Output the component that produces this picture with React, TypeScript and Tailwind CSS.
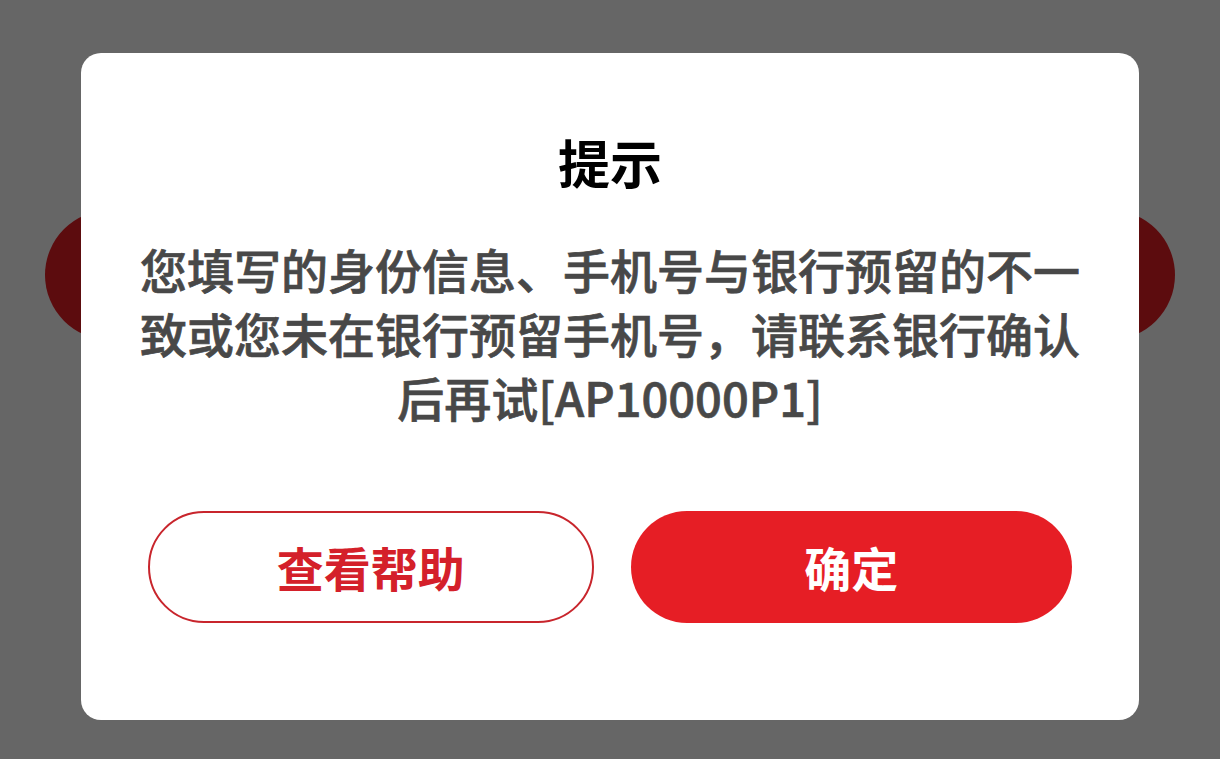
import React from "react";

export default function App() {
  const font = { fontFamily: '"Noto Sans CJK SC", "Noto Sans", sans-serif' };
  return (
    <div className="relative h-[759px] w-[1220px] overflow-hidden bg-white" style={font}>
      {/* underlying page */}
      <div className="px-[45px] pt-[210px]">
        <div className="h-[130px] w-full rounded-full bg-[#e61e25]" />
      </div>

      {/* overlay */}
      <div className="absolute inset-0 bg-black/60">
        <div className="ml-[81px] mt-[53px] flex h-[667px] w-[1058px] flex-col rounded-[20px] bg-white pt-[79px]">
          <h1 className="text-center text-[52px] font-bold leading-[60px] text-[#000]">提示</h1>
          <p className="mt-[45px] px-[55px] text-center text-[47px] font-medium leading-[64px] text-[#484848] [-webkit-text-stroke:0.7px_#484848]">
            您填写的身份信息、手机号与银行预留的不一致或您未在银行预留手机号，请联系银行确认后再试[AP10000P1]
          </p>
          <div className="mt-auto mb-[97px] flex gap-[37px] px-[67px]">
            <button className="flex h-[112px] flex-1 items-center justify-center rounded-full border-[2.5px] border-[#c8252c] bg-white text-[47px] font-bold text-[#d4202a]">
              查看帮助
            </button>
            <button className="flex h-[112px] flex-1 items-center justify-center rounded-full bg-[#e61e25] text-[47px] font-bold text-white">
              确定
            </button>
          </div>
        </div>
      </div>
    </div>
  );
}
